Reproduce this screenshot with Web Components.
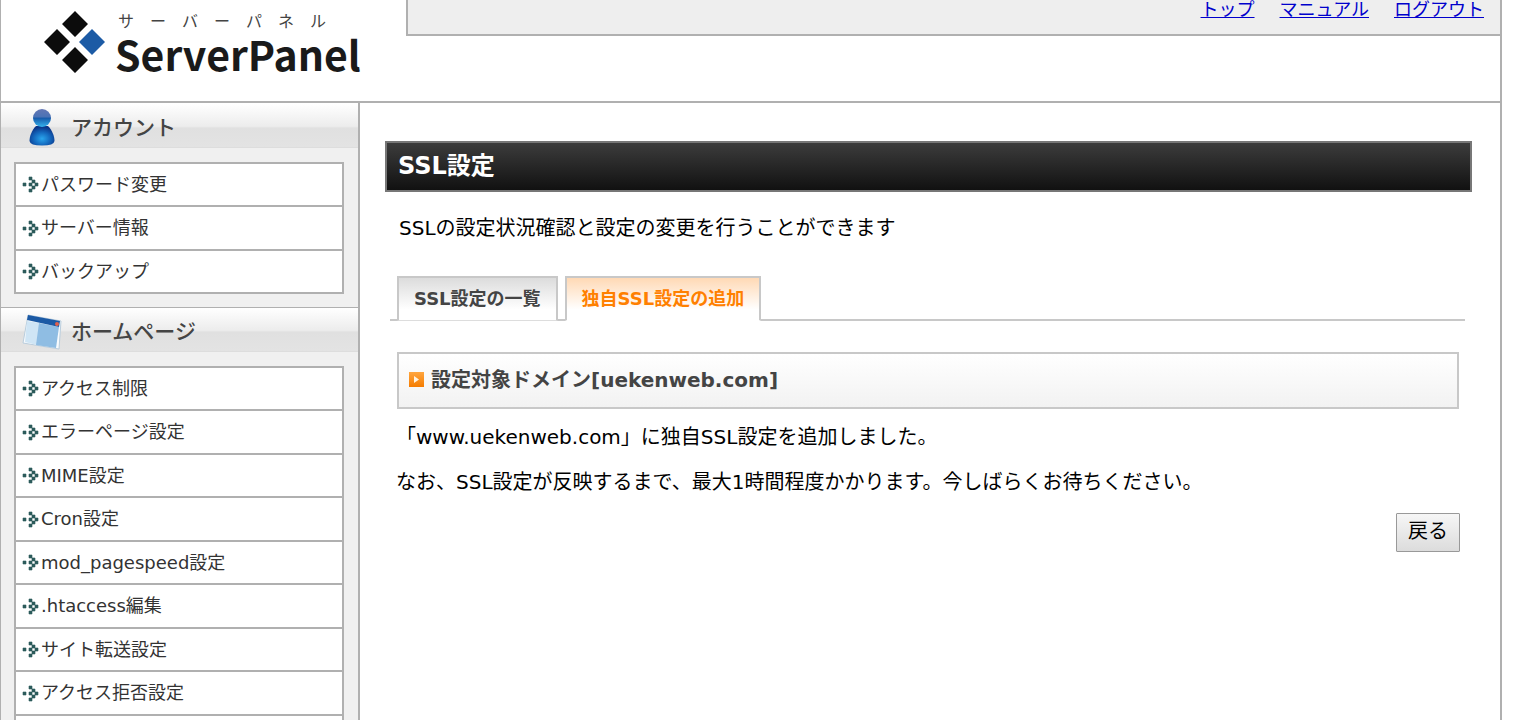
<!DOCTYPE html>
<html lang="ja">
<head>
<meta charset="utf-8">
<title>ServerPanel - SSL設定</title>
<style>
html, body { margin: 0; background: #fff; }
body { font-family: "DejaVu Sans", "Noto Sans CJK JP", sans-serif; color: #000; padding-right: 13px; overflow-x: hidden; }
</style>
</head>
<body>
<panel-app></panel-app>
<script>
const define = (name, html) => customElements.define(name, class extends HTMLElement {
  constructor() {
    super();
    this.attachShadow({ mode: "open" }).innerHTML = "<style>*{box-sizing:border-box}:host{box-sizing:border-box}</style>" + html;
  }
});

define("brand-logo", `
<style>
:host { display: flex; align-items: flex-start; gap: 10px; padding: 10px 0 0 42px; }
svg { flex: none; margin-top: 1px; }
.kana { margin-left: 3px; font: 400 16px/20px "Noto Sans CJK JP", sans-serif; color: #444; white-space: pre; }
.name { font: 700 41px/46px "Noto Sans CJK JP", sans-serif; color: #1a1a1a; }
</style>
<svg width="62" height="62" viewBox="0 0 62 62" aria-hidden="true">
  <path fill="#0c0c0c" d="M32 0 45 13 32 26 19 13ZM14 18 27 31 14 44 1 31ZM32 36 45 49 32 62 19 49Z"/>
  <path fill="#1c5ba5" d="M49 18 62 31 49 44 36 31Z"/>
</svg>
<div><div class="kana">サ　ー　バ　ー　パ　ネ　ル</div><div class="name">ServerPanel</div></div>`);

define("top-links", `
<style>
:host { display: flex; justify-content: flex-end; gap: 25px; height: 36px; padding-right: 16px;
  background: #eee; border: solid #b0b0b0; border-width: 0 1px 2px 2px; font-size: 18px; line-height: 20px; }
::slotted(a) { color: #0000cc; }
</style><slot></slot>`);

define("page-header", `
<style>
:host { display: flex; height: 103px; border-bottom: 2px solid #b0b0b0; }
brand-logo { width: 405px; flex: none; }
top-links { flex: 1; margin-right: -1px; }
</style>
<brand-logo></brand-logo>
<top-links><a href="#top">トップ</a><a href="#manual">マニュアル</a><a href="#logout">ログアウト</a></top-links>`);

define("menu-group", `
<style>
:host { display: block; border-top: 1px solid #fff; }
h2 { margin: 0; display: flex; align-items: center; gap: 8px; height: 44px; padding-left: 21px;
  font: 500 21px/30px "Noto Sans CJK JP", sans-serif; color: #444;
  background: linear-gradient(#fff, #ececec 52%, #e0e0e0 56%, #e3e3e3); border-bottom: 1px solid #ddd; }
ul { margin: 14px 14px 13px 13px; padding: 0; list-style: none; border: 2px solid #b0b0b0; border-top: 0; display: block; }
</style>
<h2><slot name="icon"></slot><slot name="title"></slot></h2>
<ul><slot></slot></ul>`);

define("menu-item", `
<style>
:host { display: block; height: 43px; border-top: 2px solid #b0b0b0; background: #fff; }
:host(:nth-of-type(even)) { height: 44px; }
a { display: flex; align-items: center; gap: 3px; height: 100%; padding-left: 7px; font-size: 18px; line-height: 26px; color: #333; text-decoration: none; }
svg { flex: none; overflow: visible; }
</style>
<a href="#menu"><svg width="15" height="15" viewBox="0 0 15 15" aria-hidden="true"><path fill="#2c5c5c" stroke="#2c5c5c" stroke-width=".6" d="M0 6h3v3H0zM6 0h3v3H6zM9 3h3v3H9zM12 6h3v3h-3zM9 9h3v3H9zM6 12h3v3H6zM6 6h3v3H6z"/></svg><span><slot></slot></span></a>`);

define("side-menu", `
<style>
:host { display: block; background: #f0f0f0; border-right: 2px solid #b0b0b0; }
.next { border-top-color: #b0b0b0; }
</style>
<nav aria-label="メニュー">
<menu-group>
  <svg slot="icon" width="41" height="40" viewBox="0 0 41 40" aria-hidden="true">
    <defs>
      <radialGradient id="b" cx=".5" cy=".65" r=".6"><stop offset="0" stop-color="#2aa5ec"/><stop offset=".55" stop-color="#1468bd"/><stop offset="1" stop-color="#0b3588"/></radialGradient>
      <linearGradient id="h" x2="0" y2="1"><stop offset="0" stop-color="#6376b4"/><stop offset=".45" stop-color="#4a72b5"/><stop offset=".5" stop-color="#1659a9"/><stop offset="1" stop-color="#35b3ee"/></linearGradient>
    </defs>
    <path fill="url(#b)" d="M14 20C10 24 7.500 30 7.500 35Q8 39.500 20 39.500T32.500 35C32.500 30 30 24 26 20Z"/>
    <circle cx="20" cy="12" r="9" fill="url(#h)"/>
  </svg>
  <span slot="title">アカウント</span>
  <menu-item>パスワード変更</menu-item><menu-item>サーバー情報</menu-item><menu-item>バックアップ</menu-item>
</menu-group>
<menu-group class="next">
  <svg slot="icon" width="41" height="40" viewBox="0 0 41 40" aria-hidden="true">
    <path fill="#f8fbfd" stroke="#b9cddd" d="M6 5 39 11 37 39 1 33Z"/>
    <path fill="#cfe5f5" d="M5 11 18 13 15 35 3 32Z"/><path fill="#8fbde3" d="M17 13 37 17 34 38 14 35Z"/>
    <path fill="#1c5aa5" d="M6 5 38 11 37 17 5 10Z"/><circle cx="35" cy="14" r="2" fill="#e0604c"/>
  </svg>
  <span slot="title">ホームページ</span>
  <menu-item>アクセス制限</menu-item><menu-item>エラーページ設定</menu-item><menu-item>MIME設定</menu-item><menu-item>Cron設定</menu-item><menu-item>mod_pagespeed設定</menu-item><menu-item>.htaccess編集</menu-item><menu-item>サイト転送設定</menu-item><menu-item>アクセス拒否設定</menu-item><menu-item></menu-item>
</menu-group>
</nav>`);

define("page-title", `
<style>
:host { display: block; border: 2px solid #777; background: linear-gradient(#3c3c3c, #111); }
h1 { margin: 0; padding: 0 11px; font-size: 24px; line-height: 47px; color: #fff; }
</style><h1><slot></slot></h1>`);

define("tab-bar", `
<style>
:host { display: flex; gap: 7px; padding-left: 7px; border-bottom: 2px solid #c8c8c8; }
</style><slot></slot>`);

define("tab-link", `
<style>
:host { display: block; margin-bottom: -2px; }
a { display: block; height: 45px; padding: 0 15px; border: 2px solid #c8c8c8; border-bottom: 1px solid #ddd;
  background: linear-gradient(#dcdcdc, #fff 75%); font-size: 18px; font-weight: 700; line-height: 42px; color: #444; text-decoration: none; }
:host([selected]) a { background: linear-gradient(#ffd9b5, #fff 75%); color: #ff8000; border-bottom-color: #fff; }
</style><a href="#tab"><slot></slot></a>`);

define("section-title", `
<style>
:host { display: block; border: 2px solid #c8c8c8; background: linear-gradient(#fff, #f2f2f2); }
h2 { margin: 0; display: flex; align-items: center; gap: 7px; height: 53px; padding: 0 10px 2px; font-size: 20px; line-height: 28px; color: #444; }
</style>
<h2><svg width="15" height="15" viewBox="0 0 15 15" aria-hidden="true"><defs><linearGradient id="o" x2="0" y2="1"><stop offset="0" stop-color="#ffa63f"/><stop offset="1" stop-color="#f57c00"/></linearGradient></defs><path fill="url(#o)" d="M0 0h15v15H0z"/><path fill="#fff3df" d="M5 4 10 7.500 5 11Z"/></svg><span><slot></slot></span></h2>`);

define("ssl-view", `
<style>
:host { display: block; padding: 38px 28px 40px 25px; font-size: 20px; }
p { margin: 0; line-height: 30px; }
.lead { margin: 21px 14px 33px; }
tab-bar { margin: 0 7px 0 5px; }
.body { margin: 31px 13px 0 12px; }
.body p { margin: 13px -1px 0; }
.body p + p { margin-top: 15px; }
.actions { display: flex; justify-content: flex-end; margin: 16px -1px 0 0; }
button { height: 39px; padding: 0 11px 4px; font: 20px/30px "DejaVu Sans", "Noto Sans CJK JP", sans-serif; color: #000;
  border: 1px solid #999; border-radius: 1px; background: linear-gradient(#f6f6f6, #dcdcdc); }
</style>
<main>
<page-title>SSL設定</page-title>
<p class="lead">SSLの設定状況確認と設定の変更を行うことができます</p>
<tab-bar><tab-link>SSL設定の一覧</tab-link><tab-link selected>独自SSL設定の追加</tab-link></tab-bar>
<div class="body">
<section-title>設定対象ドメイン[uekenweb.com]</section-title>
<p>「www.uekenweb.com」に独自SSL設定を追加しました。</p>
<p>なお、SSL設定が反映するまで、最大1時間程度かかります。今しばらくお待ちください。</p>
<div class="actions"><button type="button">戻る</button></div>
</div>
</main>`);

define("panel-app", `
<style>
:host { display: block; border: solid #b0b0b0; border-width: 0 2px 0 1px; }
.cols { display: flex; }
side-menu { width: 359px; flex: none; }
ssl-view { flex: 1; }
</style>
<page-header></page-header>
<div class="cols"><side-menu></side-menu><ssl-view></ssl-view></div>`);
</script>
</body>
</html>
